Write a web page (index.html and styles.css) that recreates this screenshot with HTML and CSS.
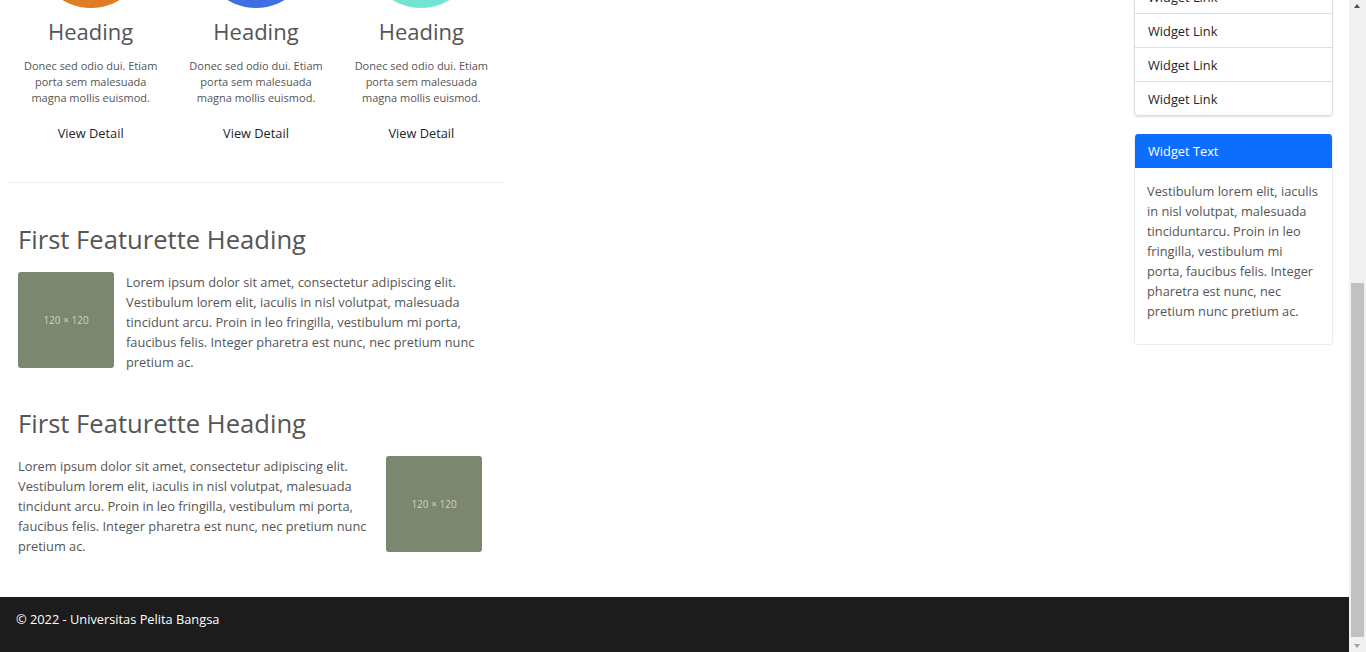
FILE: index.html
```html
<!DOCTYPE html>
<html lang="id">
<head>
<meta charset="utf-8">
<title>Universitas Pelita Bangsa</title>
<link rel="stylesheet" href="styles.css">
</head>
<body>
<nav class="topbar">
  <span class="brand">Universitas Pelita Bangsa</span>
</nav>
<div class="page">
  <main class="main">
    <section class="hero">
      <h1 class="hero-title">Selamat Datang</h1>
      <p class="hero-text">Universitas Pelita Bangsa</p>
    </section>
    <div class="circles">
      <div class="col">
        <div class="circle orange"></div>
        <h2 class="col-title">Heading</h2>
        <p class="col-text">Donec sed odio dui. Etiam porta sem malesuada magna mollis euismod.</p>
        <a class="view" href="#">View Detail</a>
      </div>
      <div class="col">
        <div class="circle blue"></div>
        <h2 class="col-title">Heading</h2>
        <p class="col-text">Donec sed odio dui. Etiam porta sem malesuada magna mollis euismod.</p>
        <a class="view" href="#">View Detail</a>
      </div>
      <div class="col">
        <div class="circle teal"></div>
        <h2 class="col-title">Heading</h2>
        <p class="col-text">Donec sed odio dui. Etiam porta sem malesuada magna mollis euismod.</p>
        <a class="view" href="#">View Detail</a>
      </div>
    </div>
    <hr class="divider">
    <section class="featurette first">
      <h2 class="feat-title">First Featurette Heading</h2>
      <div class="media">
        <div class="thumb">120 × 120</div>
        <p class="feat-text">Lorem ipsum dolor sit amet, consectetur adipiscing elit. Vestibulum lorem elit, iaculis in nisl volutpat, malesuada tincidunt arcu. Proin in leo fringilla, vestibulum mi porta, faucibus felis. Integer pharetra est nunc, nec pretium nunc pretium ac.</p>
      </div>
    </section>
    <section class="featurette second">
      <h2 class="feat-title">First Featurette Heading</h2>
      <div class="media">
        <p class="feat-text">Lorem ipsum dolor sit amet, consectetur adipiscing elit. Vestibulum lorem elit, iaculis in nisl volutpat, malesuada tincidunt arcu. Proin in leo fringilla, vestibulum mi porta, faucibus felis. Integer pharetra est nunc, nec pretium nunc pretium ac.</p>
        <div class="thumb">120 × 120</div>
      </div>
    </section>
  </main>
  <aside class="side">
    <div class="search-card">
      <div class="search-head">Widget Search</div>
      <div class="search-body"><div class="search-input">Search...</div></div>
    </div>
    <ul class="links">
      <li class="link-item">Widget Link</li>
      <li class="link-item">Widget Link</li>
      <li class="link-item">Widget Link</li>
      <li class="link-item">Widget Link</li>
      <li class="link-item">Widget Link</li>
      <li class="link-item">Widget Link</li>
      <li class="link-item">Widget Link</li>
      <li class="link-item">Widget Link</li>
      <li class="link-item">Widget Link</li>
      <li class="link-item">Widget Link</li>
    </ul>
    <div class="text-card">
      <div class="text-head">Widget Text</div>
      <div class="text-body">
        <p class="text-p">Vestibulum lorem elit, iaculis in nisl volutpat, malesuada tinciduntarcu. Proin in leo fringilla, vestibulum mi porta, faucibus felis. Integer pharetra est nunc, nec pretium nunc pretium ac.</p>
      </div>
    </div>
  </aside>
</div>
<footer class="footer">© 2022 - Universitas Pelita Bangsa</footer>
<div class="scrollbar" aria-hidden="true">
  <span class="arrow-up"></span>
  <span class="thumb-bar"></span>
  <span class="arrow-down"></span>
</div>
<script src="script.js"></script>
</body>
</html>
```

FILE: styles.css
```css
html, body {
  margin: 0;
  padding: 0;
}
body {
  font-family: "Open Sans", "Liberation Sans", sans-serif;
  font-size: 12.8px;
  line-height: 20px;
  color: #555;
  background: #fff;
  margin-right: 17px;
}
.topbar {
  height: 56px;
  background: #1c1c1c;
  color: #fff;
  display: flex;
  align-items: center;
  padding: 0 16px;
}
.brand { font-size: 16px; }
.page {
  display: flex;
  align-items: flex-start;
  padding-top: 24px;
}
.main {
  width: 496px;
  margin-left: 8px;
  margin-bottom: 41px;
}
.hero {
  height: 276px;
  margin-bottom: 24px;
  background: #f4f4f4;
  box-sizing: border-box;
  padding: 60px 24px;
}
.hero-title { margin: 0 0 12px; font-weight: 400; font-size: 32px; line-height: 40px; }
.hero-text { margin: 0; }
.circles {
  display: grid;
  grid-template-columns: repeat(3, 1fr);
  text-align: center;
}
.col { padding: 0 12px; }
.circle {
  width: 112px;
  height: 112px;
  border-radius: 50%;
  margin: 0 auto 10px;
}
.orange { background: #e07b26; }
.blue { background: #3f70e1; }
.teal { background: #74e4d2; }
.col-title {
  font-size: 22px;
  font-weight: 400;
  line-height: 27px;
  margin: 0 0 13px;
  color: #555;
}
.col-text {
  font-size: 11px;
  line-height: 16px;
  margin: 0 0 17px;
}
.view {
  display: block;
  color: #212529;
  text-decoration: none;
  font-size: 12.8px;
  line-height: 20px;
}
.divider {
  border: 0;
  height: 1px;
  background: #efefef;
  margin: 39px 0 0;
}
.featurette {
  width: 464px;
  margin-left: 10px;
}
.feat-title {
  font-size: 25.6px;
  font-weight: 400;
  line-height: 34px;
  margin: 0 0 15px;
  color: #555;
}
.first .feat-title { margin-top: 40px; }
.second .feat-title { margin-top: 35px; }
.media {
  display: flex;
  align-items: flex-start;
  gap: 12px;
}
.feat-text { margin: 0; flex: 1; }
.thumb {
  flex: none;
  width: 96px;
  height: 96px;
  border-radius: 3px;
  background: #7c876f;
  color: #cdd2c6;
  font-size: 10px;
  display: flex;
  align-items: center;
  justify-content: center;
}
.side {
  width: 199px;
  margin-left: auto;
  margin-right: 16px;
}
.search-card {
  height: 161px;
  margin-bottom: 18px;
  border: 1px solid #e6e6e6;
  border-radius: 4px;
  box-sizing: border-box;
}
.search-head {
  background: #f7f7f7;
  padding: 7px 13px;
  border-bottom: 1px solid #e6e6e6;
}
.search-body { padding: 12px; }
.search-input {
  border: 1px solid #ccc;
  border-radius: 4px;
  padding: 4px 8px;
  color: #999;
}
.links {
  list-style: none;
  margin: 0;
  padding: 0;
  border: 1px solid #dedede;
  border-radius: 4px;
  box-shadow: 0 1px 2px rgba(0, 0, 0, 0.12);
}
.link-item {
  padding: 6.5px 13px;
  line-height: 20px;
  color: #212529;
}
.link-item + .link-item { border-top: 1px solid #dedede; }
.text-card {
  margin-top: 18px;
  border: 1px solid #ececec;
  border-top: 0;
  border-radius: 4px;
  overflow: hidden;
}
.text-head {
  background: #0d6efd;
  color: #fff;
  padding: 7px 13px;
  line-height: 20px;
  margin: 0 -1px;
  padding-left: 14px;
}
.text-body { padding: 13px 12px 12px; }
.text-p { margin: 0 0 11px; }
.footer {
  background: #1c1c1c;
  color: #fff;
  padding: 12px 16px 23px;
  line-height: 20px;
}
.scrollbar {
  position: fixed;
  top: 0;
  right: 0;
  width: 17px;
  height: 100%;
  background: #f1f1f1;
}
.arrow-up {
  position: absolute;
  top: 4px;
  left: 5px;
  width: 0;
  height: 0;
  border-left: 3.5px solid transparent;
  border-right: 3.5px solid transparent;
  border-bottom: 4px solid #505050;
}
.arrow-down {
  position: absolute;
  bottom: 4px;
  left: 5px;
  width: 0;
  height: 0;
  border-left: 3.5px solid transparent;
  border-right: 3.5px solid transparent;
  border-top: 4px solid #a3a3a3;
}
.thumb-bar {
  position: absolute;
  top: 283px;
  left: 2px;
  width: 13px;
  height: 354px;
  background: #c1c1c1;
}
```

FILE: script.js
```js
function toBottom() {
  window.scrollTo(0, document.documentElement.scrollHeight);
}
toBottom();
window.addEventListener('load', toBottom);
```
